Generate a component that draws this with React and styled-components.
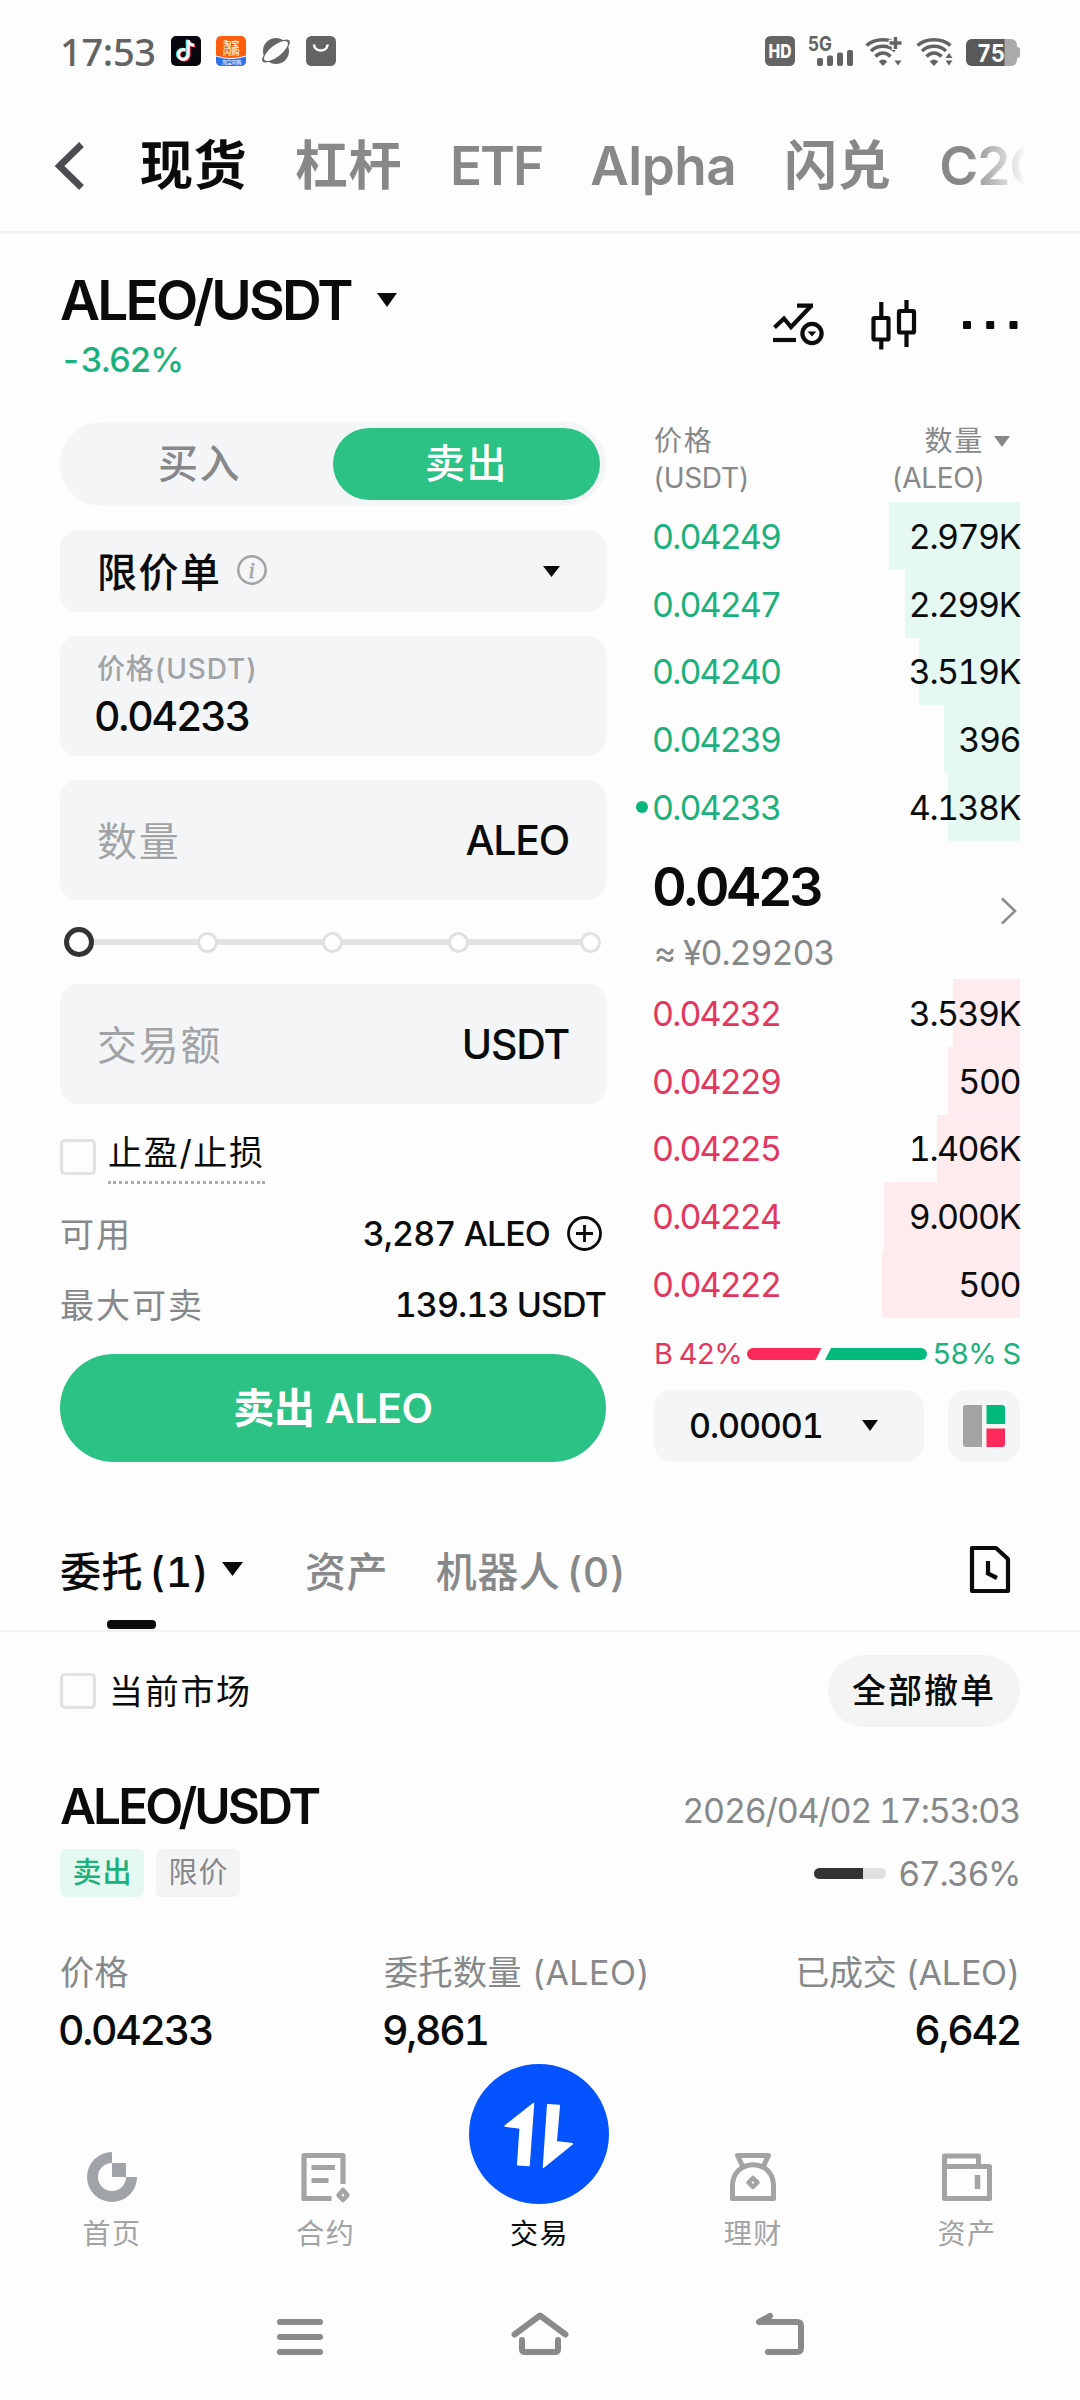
import React from "react";
import styled, { createGlobalStyle, css } from "styled-components";

const colors = {
  ink: "#0a0b0b",
  grey: "#86888a",
  light: "#a1a3a5",
  line: "#f2f2f2",
  field: "#f4f5f7",
  green: "#2cc286",
  up: "#1cb17c",
  down: "#e2375f",
};

const buys = [
  { price: "0.04249", amount: "2.979K", depth: 131 },
  { price: "0.04247", amount: "2.299K", depth: 115 },
  { price: "0.04240", amount: "3.519K", depth: 101 },
  { price: "0.04239", amount: "396", depth: 76 },
  { price: "0.04233", amount: "4.138K", depth: 72, mine: true },
];

const sells = [
  { price: "0.04232", amount: "3.539K", depth: 67 },
  { price: "0.04229", amount: "500", depth: 72 },
  { price: "0.04225", amount: "1.406K", depth: 83 },
  { price: "0.04224", amount: "9.000K", depth: 136 },
  { price: "0.04222", amount: "500", depth: 138 },
];

const GlobalStyle = createGlobalStyle`
  * {
    box-sizing: border-box;
  }
  body {
    margin: 0;
    background: #fdfdfd;
    color: ${colors.ink};
    font-family: Inter, "Noto Sans CJK SC", sans-serif;
    font-variant-numeric: tabular-nums;
  }
  svg {
    display: block;
    flex: none;
    overflow: visible;
  }
`;

const Caret = ({ w = 16, h = 11, color = colors.ink }) => (
  <svg width={w} height={h} viewBox="0 0 16 11" preserveAspectRatio="none">
    <path d="M0 0H16L8 11Z" fill={color} />
  </svg>
);

const notePath = "M14.6 14.2a4.9 4.9 0 1 0 2.6 4.5V4.2c.4 2.9 2.6 4.8 6 5";

const DouyinIcon = () => (
  <svg width="30" height="30" viewBox="0 0 30 30">
    <rect width="30" height="30" rx="5" fill="#07070d" />
    <g fill="none" strokeWidth="3">
      <path d={notePath} stroke="#25f4ee" transform="translate(-1 -.4)" />
      <path d={notePath} stroke="#fe2c55" transform="translate(.9 .7)" />
      <path d={notePath} stroke="#fff" />
    </g>
  </svg>
);

const TaobaoIcon = () => (
  <svg width="30" height="30" viewBox="0 0 30 30">
    <clipPath id="tb">
      <rect width="30" height="30" rx="5" />
    </clipPath>
    <g clipPath="url(#tb)">
      <rect width="30" height="30" fill="#fb5f0c" />
      <path d="M0 19.5Q15 24.5 30 19.5V30H0Z" fill="#2b72ea" />
      <path d="M0 20Q15 25 30 20" fill="none" stroke="#fff" strokeWidth="1" />
      <g fill="#fff" fontWeight="500">
        <text x="7" y="10.5" fontSize="8.3">淘宝</text>
        <text x="7" y="19" fontSize="8.3">闪购</text>
        <text x="6" y="28.4" fontSize="4.8">淘宝闪购</text>
      </g>
    </g>
  </svg>
);

const PlanetIcon = () => (
  <svg width="30" height="30" viewBox="0 0 30 30">
    <circle cx="15" cy="15" r="13" fill="#666" />
    <ellipse cx="15" cy="15" rx="17" ry="6" fill="#666" transform="rotate(-38 15 15)" />
    <ellipse cx="15" cy="15" rx="14.5" ry="5.6" fill="#fdfdfd" transform="rotate(-38 15 15)" />
  </svg>
);

const BagIcon = () => (
  <svg width="30" height="30" viewBox="0 0 30 30">
    <rect width="30" height="30" rx="5.5" fill="#636363" />
    <path d="M8 8.5c.6 8 13 8 13.600 0" fill="none" stroke="#fff" strokeWidth="2.6" />
  </svg>
);

const HdIcon = () => (
  <svg width="30" height="30" viewBox="0 0 30 30">
    <rect width="30" height="30" rx="5.5" fill="#646464" />
    <text x="3.5" y="21.8" fontSize="18.5" fontWeight="800" fill="#fff" textLength="23" lengthAdjust="spacingAndGlyphs">
      HD
    </text>
  </svg>
);

const SignalIcon = () => (
  <svg width="45" height="30" viewBox="0 0 45 30" fill="#636363">
    <text x="0" y="14.5" fontSize="20" fontWeight="700" textLength="24" lengthAdjust="spacingAndGlyphs">
      5G
    </text>
    <rect x="9" y="22" width="6" height="8" rx="2" />
    <rect x="19" y="19.5" width="6" height="10.5" rx="2" />
    <rect x="29" y="16.5" width="6" height="13.5" rx="2" />
    <rect x="39" y="14" width="6" height="16" rx="2" />
  </svg>
);

const WifiIcon = ({ plus }) => (
  <svg width="38" height="30" viewBox="0 0 38 30">
    <g fill="none" stroke="#636363" strokeWidth="3.6">
      <path d="M1.5 9.5Q8 3.7 18 3.7T34.5 9.5" />
      <path d="M6 15Q11 10.3 18 10.3T30 15" />
      <path d="M10.5 20.5Q14 17 18 17T25.5 20.5" />
    </g>
    <path d="M13.8 25.5Q18 21.5 22.2 25.5L18 30Z" fill="#636363" />
    {plus && <path d="M30 0V14M23.5 7H37" stroke="#fdfdfd" strokeWidth="6.5" />}
    {plus && <path d="M30.5 1V13M24.5 7H36.5" stroke="#636363" strokeWidth="3.4" />}
    <path d="M28 16h9v14h-9Z" fill="#fdfdfd" />
    <path d="M29.5 24.5h7l-3.5 5Z" fill="#636363" />
    {!plus && <path d="M29.5 22h7l-3.5-5Z" fill="#636363" />}
  </svg>
);

const BatteryIcon = () => (
  <svg width="54" height="27" viewBox="0 0 54 27">
    <path d="M50 8h1.5a2.5 2.5 0 0 1 2.5 2.5v6a2.5 2.5 0 0 1-2.5 2.5H50Z" fill="#aaa" />
    <rect width="51" height="27" rx="6" fill="#aaa" />
    <path d="M6 0H38.5V27H6a6 6 0 0 1-6-6V6a6 6 0 0 1 6-6Z" fill="#595959" />
    <text x="11" y="22.5" fontSize="24" fontWeight="700" fill="#fff" textLength="28" lengthAdjust="spacingAndGlyphs">
      75
    </text>
  </svg>
);

const BackChevron = () => (
  <svg width="30" height="50" viewBox="0 0 30 50">
    <path d="M26.5 3.5L4.5 25L26.5 46.5" fill="none" stroke="#4b4d51" strokeWidth="6.8" />
  </svg>
);

const ChartAlertIcon = () => (
  <svg width="52" height="44" viewBox="0 0 52 44" fill="none" stroke={colors.ink} strokeWidth="4.2">
    <path d="M1.5 24.5L11 15.5L18 24L38 3M24 2.6H40" />
    <path d="M0 37H23" />
    <circle cx="39" cy="30.5" r="9.6" />
    <path d="M34.5 28.5h8.8L39 33.5Z" fill={colors.ink} stroke="none" />
  </svg>
);

const CandleIcon = () => (
  <svg width="46" height="50" viewBox="0 0 46 50" fill="none" stroke={colors.ink} strokeWidth="4.2">
    <rect x="2.5" y="18" width="15" height="21.5" rx="1" />
    <path d="M10.3 2V17M10.3 40V49.5" />
    <rect x="28" y="11" width="15" height="21.5" rx="1" />
    <path d="M35.5 0V10M35.5 33V47" />
  </svg>
);

const MoreIcon = () => (
  <svg width="55" height="8" viewBox="0 0 55 8" fill={colors.ink}>
    <rect width="8" height="8" rx="1" />
    <rect x="23.2" width="8" height="8" rx="1" />
    <rect x="46.5" width="8" height="8" rx="1" />
  </svg>
);

const InfoIcon = () => (
  <svg width="30" height="30" viewBox="0 0 30 30">
    <circle cx="15" cy="15" r="13.7" fill="none" stroke={colors.light} strokeWidth="2.5" />
    <text x="11.5" y="22.5" fontSize="23" fontStyle="italic" fontFamily="Liberation Serif, serif" letterSpacing="0" fill={colors.light} stroke={colors.light} strokeWidth=".5">
      i
    </text>
  </svg>
);

const PlusCircle = () => (
  <svg width="35" height="35" viewBox="0 0 35 35" fill="none" stroke={colors.ink} strokeWidth="2.8">
    <circle cx="17.5" cy="17.5" r="16" />
    <path d="M17.5 9V26M9 17.5H26" />
  </svg>
);

const ChevronRight = () => (
  <svg width="17" height="28" viewBox="0 0 17 28">
    <path d="M2 1.5L15 14L2 26.5" fill="none" stroke="#8a8c8e" strokeWidth="2.5" />
  </svg>
);

const RatioBar = () => (
  <svg width="180" height="12" viewBox="0 0 180 12">
    <path d="M6 0H74.5L68.5 12H6A6 6 0 0 1 6 0Z" fill="#ff2a5b" />
    <path d="M84 0H174A6 6 0 0 1 174 12H78Z" fill="#00b97c" />
  </svg>
);

const BookLayoutIcon = () => (
  <svg width="42" height="42" viewBox="0 0 42 42">
    <path d="M3 0H19V42H3A3 3 0 0 1 0 39V3A3 3 0 0 1 3 0Z" fill={colors.light} />
    <path d="M23.5 0H39A3 3 0 0 1 42 3V19H23.5Z" fill="#00b97c" />
    <path d="M23.5 23.5H42V39A3 3 0 0 1 39 42H23.5Z" fill="#ff2a5b" />
  </svg>
);

const HistoryIcon = () => (
  <svg width="40" height="47" viewBox="0 0 40 47" fill="none" stroke={colors.ink} strokeWidth="4.2" strokeLinejoin="round">
    <path d="M2 2H26L38 13V45H2Z" />
    <path d="M18 15V27.5L27 32" strokeLinejoin="miter" />
  </svg>
);

const HomeLogo = () => (
  <svg width="50" height="50" viewBox="0 0 50 50" fill="#a0a3a7">
    <path d="M25 0A25 25 0 1 0 50 25H39A14 14 0 1 1 25 11Z" />
    <rect x="25" y="11" width="14" height="14" />
  </svg>
);

const ContractIcon = () => (
  <svg width="50" height="50" viewBox="0 0 50 50" fill="none" stroke={colors.light} strokeWidth="5.2" strokeLinejoin="round">
    <path d="M42 32V3.5H3V46.5H30.5" />
    <path d="M10.5 15.5H34M10.5 28.5H27.5" strokeWidth="5" />
    <path d="M42 38L46.5 43.2L42 48L37.5 43.2Z" strokeWidth="4.5" />
  </svg>
);

const MoneyBagIcon = () => (
  <svg width="50" height="50" viewBox="0 0 50 50" fill="none" stroke={colors.light} strokeWidth="5" strokeLinejoin="round">
    <path d="M4.5 46.5V34C4.5 5.5 45.5 5.5 45.5 34V46.5Z" />
    <path d="M14.5 14L9.5 3.5H40.5L35.5 14" />
    <path d="M25 26L29.5 30.5L25 35L20.5 30.5Z" strokeWidth="4.5" />
  </svg>
);

const WalletIcon = () => (
  <svg width="52" height="50" viewBox="0 0 52 50" fill="none" stroke={colors.light} strokeWidth="5" strokeLinejoin="round">
    <path d="M3.5 14.5H48.5V46.5H3.5V4H37.5V14.5" />
    <path d="M36.5 23V37" strokeWidth="5.5" />
  </svg>
);

const TradeIcon = () => (
  <svg width="140" height="140" viewBox="0 0 140 140" fill="#fff" stroke="#fff" strokeWidth="1.5" strokeLinejoin="round">
    <path d="M64.5 39.5L60 101.600L48.7 100.8L51.2 64L36 62Z" />
    <path d="M78.7 40.7L90.3 41.6L87.2 77.7L103.3 79.8L74.5 103.2Z" />
  </svg>
);

const MenuKey = () => (
  <svg width="46" height="44" viewBox="0 0 46 44" stroke="#8a8a8a" strokeWidth="6" strokeLinecap="round">
    <path d="M3 10H43M3 25H43M3 40H43" />
  </svg>
);

const HomeKey = () => (
  <svg width="58" height="44" viewBox="0 0 58 44" fill="none" stroke="#8a8a8a" strokeWidth="6" strokeLinecap="round" strokeLinejoin="round">
    <path d="M3.5 22.5L29 3.5L54.5 22.5" />
    <path d="M11 28V37Q11 40 14 40H44Q47 40 47 37V28" />
  </svg>
);

const BackKey = () => (
  <svg width="48" height="44" viewBox="0 0 48 44" fill="none" stroke="#8a8a8a" strokeWidth="6" strokeLinecap="round" strokeLinejoin="round">
    <path d="M14 4L3 10H41Q45 10 45 14V36Q45 40 41 40H12" />
  </svg>
);

const Page = styled.div`
  width: 1080px;
  height: 2400px;
  overflow: hidden;
`;

const Row = styled.div`
  display: flex;
  align-items: center;
`;

const StatusBar = styled(Row)`
  height: 100px;
  padding: 2px 60px 0;
  justify-content: space-between;
`;

const Clock = styled.span`
  width: 111px;
  font-size: 38px;
  line-height: 40px;
  font-weight: 500;
  font-family: "Noto Sans", sans-serif;
  letter-spacing: -0.3px;
  color: #636363;
`;

const StatusLeft = styled(Row)`
  gap: 15px;

  ${Clock} {
    margin-right: -15px;
  }
`;

const StatusRight = styled(Row)`
  gap: 12.5px;

  svg:last-child {
    margin-top: 3px;
  }
`;

const TopTabs = styled(Row)`
  height: 134px;
  padding: 0 50px 0 55px;
  border-bottom: 3px solid ${colors.line};
`;

const TabScroller = styled(Row)`
  flex: 1;
  margin-left: 55px;
  gap: 48px;
  overflow: hidden;
  mask-image: linear-gradient(to right, #000 calc(100% - 62px), transparent calc(100% - 4px));
`;

const TopTab = styled.span`
  flex: none;
  font-size: 53px;
  line-height: 70px;
  font-weight: ${(p) => (p.$active ? 700 : 600)};
  color: ${(p) => (p.$active ? colors.ink : colors.grey)};
  letter-spacing: ${(p) => p.$track ?? 0.5}px;
`;

const PairHeader = styled.header`
  display: flex;
  justify-content: space-between;
  height: 188px;
  padding: 34px 62px 0 60px;
`;

const PairName = styled(Row)`
  gap: 26px;
  font-size: 55px;
  line-height: 64px;
  font-weight: 600;
  letter-spacing: -2.8px;
`;

const PairChange = styled.div`
  margin-top: 8px;
  font-size: 34px;
  line-height: 40px;
  font-weight: 500;
  letter-spacing: -1.4px;
  color: ${colors.up};
`;

const PairTools = styled(Row)`
  height: 114px;
  gap: 46px;
`;

const Trade = styled.main`
  display: grid;
  grid-template-columns: 546px 366px;
  gap: 48px;
  padding: 0 60px;
  height: 1040px;
`;

const Column = styled.section`
  display: flex;
  flex-direction: column;
`;

const SideSwitch = styled.div`
  display: grid;
  grid-template-columns: 1fr 267px;
  height: 84px;
  padding: 6px;
  border-radius: 42px;
  background: ${colors.field};
`;

const SideOption = styled.button`
  border: 0;
  border-radius: 36px;
  background: ${(p) => (p.$active ? colors.green : "transparent")};
  color: ${(p) => (p.$active ? "#fff" : colors.grey)};
  font: 500 40px/72px Inter, "Noto Sans CJK SC", sans-serif;
  letter-spacing: 1.5px;
  padding: 0;
`;

const Field = styled(Row)`
  justify-content: space-between;
  height: ${(p) => p.$height || 120}px;
  margin-top: ${(p) => p.$top ?? 24}px;
  padding: 0 ${(p) => p.$right || 37}px 0 37px;
  border-radius: 18px;
  background: ${colors.field};
  font-size: 41px;
  font-weight: 500;
  letter-spacing: -1.2px;
`;

const OrderType = styled(Row)`
  gap: 15px;
  margin-top: -2px;
  font-size: 40px;
  letter-spacing: 1.5px;
`;

const Placeholder = styled.span`
  margin-top: -3px;
  color: ${colors.light};
  font-size: 40px;
  font-weight: 400;
  letter-spacing: 1.8px;
`;

const PriceField = styled(Field)`
  flex-direction: column;
  align-items: flex-start;
  justify-content: flex-start;
  padding-top: 13px;
`;

const PriceLabel = styled.span`
  font-size: 28px;
  line-height: 40px;
  color: ${colors.light};
  letter-spacing: 0.8px;
`;

const PriceValue = styled.span`
  margin: 2px 0 0 -3px;
  line-height: 50px;
  letter-spacing: -2.2px;
`;

const SliderStop = styled.i`
  position: relative;
  width: ${(p) => (p.$current ? 30 : 21)}px;
  height: ${(p) => (p.$current ? 30 : 21)}px;
  margin-right: ${(p) => (p.$current ? -2 : 0)}px;
  border: ${(p) => (p.$current ? "5px solid #323335" : "3px solid #dfe1e1")};
  border-radius: 50%;
  background: #fff;
`;

const Slider = styled(Row)`
  position: relative;
  height: 84px;
  padding: 0 5px 0 4px;
  gap: 104.5px;

  &::before {
    content: "";
    position: absolute;
    left: 20px;
    right: 20px;
    top: 39px;
    height: 6px;
    background: #e1e3e3;
  }

  ${SliderStop}:last-child {
    margin-left: auto;
  }
`;

const CheckBox = styled.i`
  width: 36px;
  height: 36px;
  border: 3px solid #e1e2e2;
  border-radius: 5px;
`;

const StopRow = styled.div`
  display: flex;
  align-items: flex-start;
  gap: 12px;
  height: 94px;
  padding-top: 24px;

  ${CheckBox} {
    margin-top: 11px;
  }
`;

const StopLabel = styled.span`
  height: 56px;
  font-size: 34px;
  line-height: 50px;
  letter-spacing: 1.7px;
  border-bottom: 3px dotted #aaacae;
`;

const BalanceRow = styled(Row)`
  height: 71px;
  justify-content: space-between;
  font-size: 34px;
`;

const BalanceLabel = styled.span`
  margin-top: -3px;
  color: ${colors.grey};
  letter-spacing: 2px;
`;

const BalanceValue = styled(Row)`
  gap: 17px;
  padding-right: ${(p) => (p.$icon ? 4 : 0)}px;
  font-weight: 500;
  letter-spacing: -0.9px;
`;

const SellButton = styled.button`
  height: 108px;
  margin-top: 14px;
  border: 0;
  border-radius: 54px;
  background: ${colors.green};
  color: #fff;
  font: 600 41px/50px Inter, "Noto Sans CJK SC", sans-serif;
  letter-spacing: -0.3px;
`;

const BookHead = styled.div`
  display: flex;
  justify-content: space-between;
  height: 80px;
  padding-top: 1px;
  font-size: 28px;
  line-height: 37px;
  color: ${colors.grey};
`;

const HeadName = styled(Row)`
  gap: 10px;
  letter-spacing: 1.8px;
`;

const HeadUnit = styled.div`
  margin-left: -1px;
  letter-spacing: -0.3px;
`;

const BookHeadCell = styled.div`
  ${(p) =>
    p.$right &&
    css`
      padding-right: 35px;

      ${HeadName} {
        justify-content: flex-end;
        margin-right: -25px;
      }
    `}
`;

const Level = styled(Row)`
  position: relative;
  height: 67.8px;
  padding-top: 1px;
  justify-content: space-between;
  font-size: 34px;
  letter-spacing: -1.5px;
  background: linear-gradient(${(p) => (p.$side === "buy" ? "#e5f8f1, #e5f8f1" : "#fdebee, #fdebee")}) right / ${(p) => p.$depth}px 100% no-repeat;
`;

const LevelPrice = styled.span`
  margin-left: -2px;
  letter-spacing: -1.9px;
  color: ${(p) => (p.$side === "buy" ? colors.up : colors.down)};
`;

const MineDot = styled.i`
  position: absolute;
  left: -18px;
  top: 28px;
  width: 12px;
  height: 12px;
  border-radius: 50%;
  background: #06b57a;
`;

const LastPrice = styled(Row)`
  height: 138px;
  justify-content: space-between;
  padding: 12px 3px 0 0;

  svg {
    margin-top: -10px;
  }
`;

const LastValue = styled.div`
  margin-left: -2px;
  font-size: 54px;
  line-height: 66px;
  font-weight: 600;
  letter-spacing: -3.4px;
`;

const FiatValue = styled.div`
  margin-top: 8px;
  font-size: 34px;
  line-height: 50px;
  color: ${colors.grey};
  letter-spacing: -1.1px;
`;

const Ratio = styled(Row)`
  height: 72px;
  justify-content: space-between;
  font-size: 29px;
  letter-spacing: -1px;
`;

const RatioText = styled.span`
  color: ${(p) => (p.$side === "buy" ? colors.up : colors.down)};
`;

const BookControls = styled.div`
  display: grid;
  grid-template-columns: 270px 72px;
  justify-content: space-between;
  height: 72px;
`;

const Precision = styled(Row)`
  justify-content: space-between;
  padding: 0 46px 0 35px;
  border-radius: 18px;
  background: ${colors.field};
  font-size: 34px;
  font-weight: 500;
  letter-spacing: -1.1px;
`;

const LayoutButton = styled(Row)`
  justify-content: center;
  border-radius: 18px;
  background: ${colors.field};
`;

const OrderTabs = styled(Row)`
  height: 120px;
  margin-top: 50px;
  padding: 0 70px 0 60px;
  border-bottom: 2px solid ${colors.line};
`;

const OrderTab = styled(Row)`
  position: relative;
  height: 118px;
  margin-right: ${(p) => p.$gap || 0}px;
  padding-bottom: 5px;
  gap: 13px;
  font-size: 41px;
  font-weight: 500;
  letter-spacing: 0.4px;
  word-spacing: -5px;
  color: ${(p) => (p.$active ? colors.ink : colors.grey)};

  ${(p) =>
    p.$active &&
    css`
      &::after {
        content: "";
        position: absolute;
        left: 47px;
        bottom: 1px;
        width: 49px;
        height: 9px;
        border-radius: 4px;
        background: ${colors.ink};
      }
    `}
`;

const HistorySlot = styled.div`
  margin: -3px 0 0 auto;
`;

const FilterRow = styled(Row)`
  height: 118px;
  padding: 0 60px;
  gap: 13px;
  font-size: 34px;
  letter-spacing: 1.7px;
`;

const FilterLabel = styled.span`
  margin-top: -3px;
`;

const CancelAll = styled.button`
  margin-left: auto;
  width: 192px;
  height: 72px;
  padding: 0;
  border: 0;
  border-radius: 36px;
  background: #f4f4f5;
  color: ${colors.ink};
  font: 500 34px/50px Inter, "Noto Sans CJK SC", sans-serif;
  letter-spacing: 2px;
`;

const OrderCard = styled.article`
  height: 305px;
  padding: 26px 60px 0;
`;

const OrderLine = styled(Row)`
  height: ${(p) => p.$height}px;
  margin-top: ${(p) => p.$top || 0}px;
  justify-content: space-between;
`;

const OrderPair = styled.h2`
  margin: 0;
  font-size: 49.5px;
  line-height: 60px;
  font-weight: 600;
  letter-spacing: -2.9px;
`;

const OrderTime = styled.time`
  padding-top: 8px;
  font-size: 34px;
  color: ${colors.grey};
  letter-spacing: -1.2px;
`;

const Tags = styled(Row)`
  gap: 12px;
`;

const Tag = styled.span`
  width: 84px;
  height: 48px;
  padding-left: 1px;
  border-radius: 6px;
  font-size: 29px;
  line-height: 48px;
  letter-spacing: 1px;
  text-align: center;
  background: ${(p) => (p.$sell ? "#e5f8f1" : "#f4f4f5")};
  color: ${(p) => (p.$sell ? colors.up : colors.grey)};
  font-weight: ${(p) => (p.$sell ? 500 : 400)};
`;

const Progress = styled(Row)`
  gap: 12px;
  font-size: 34px;
  color: ${colors.grey};
  letter-spacing: -1.5px;
`;

const ProgressTrack = styled.div`
  width: 72px;
  height: 11px;
  border-radius: 6px;
  overflow: hidden;
  background: #dfe1e1;
`;

const ProgressFill = styled.div`
  width: ${(p) => p.$value}%;
  height: 100%;
  background: #323335;
`;

const Stats = styled.dl`
  display: grid;
  grid-template-columns: 324px auto 1fr;
  margin: 56px 0 0;
`;

const Stat = styled.div`
  text-align: ${(p) => (p.$right ? "right" : "left")};

  dt {
    font-size: 34px;
    line-height: 40px;
    color: ${colors.grey};
    letter-spacing: ${(p) => (p.$right ? -0.2 : 0.5)}px;
  }
  dd {
    margin: 12px 0 0 -2px;
    font-size: 41px;
    line-height: 50px;
    font-weight: 500;
    letter-spacing: -2.3px;
  }
`;

const TabBar = styled.nav`
  display: grid;
  grid-template-columns: repeat(5, 213.8px);
  align-items: end;
  height: 209px;
  padding: 0 0 12px 5px;
`;

const TabItem = styled.div`
  display: flex;
  flex-direction: column;
  align-items: center;
  gap: ${(p) => (p.$active ? 12 : 14)}px;
  font-size: 28px;
  line-height: 36px;
  letter-spacing: 1.5px;
  color: ${(p) => (p.$active ? colors.ink : colors.light)};
`;

const TradeBadge = styled.div`
  width: 140px;
  height: 140px;
  border-radius: 50%;
  background: #0552ff;
`;

const SystemKeys = styled.div`
  display: grid;
  grid-template-columns: repeat(3, 240px);
  justify-content: center;
  justify-items: center;
  padding-top: 48px;
`;

const OrderBookSide = ({ side, levels }) =>
  levels.map((level) => (
    <Level key={level.price} $side={side} $depth={level.depth}>
      {level.mine && <MineDot />}
      <LevelPrice $side={side}>{level.price}</LevelPrice>
      <span>{level.amount}</span>
    </Level>
  ));

const OrderForm = () => (
  <Column>
    <SideSwitch>
      <SideOption>买入</SideOption>
      <SideOption $active>卖出</SideOption>
    </SideSwitch>
    <Field $height={82} $right={46}>
      <OrderType>
        限价单 <InfoIcon />
      </OrderType>
      <Caret w={17} />
    </Field>
    <PriceField>
      <PriceLabel>价格(USDT)</PriceLabel>
      <PriceValue>0.04233</PriceValue>
    </PriceField>
    <Field>
      <Placeholder>数量</Placeholder>
      ALEO
    </Field>
    <Slider>
      <SliderStop $current />
      <SliderStop />
      <SliderStop />
      <SliderStop />
      <SliderStop />
    </Slider>
    <Field $top={0}>
      <Placeholder>交易额</Placeholder>
      USDT
    </Field>
    <StopRow>
      <CheckBox />
      <StopLabel>止盈/止损</StopLabel>
    </StopRow>
    <BalanceRow>
      <BalanceLabel>可用</BalanceLabel>
      <BalanceValue $icon>
        3,287 ALEO <PlusCircle />
      </BalanceValue>
    </BalanceRow>
    <BalanceRow>
      <BalanceLabel>最大可卖</BalanceLabel>
      <BalanceValue>139.13 USDT</BalanceValue>
    </BalanceRow>
    <SellButton>卖出 ALEO</SellButton>
  </Column>
);

const OrderBook = () => (
  <Column>
    <BookHead>
      <BookHeadCell>
        <HeadName>价格</HeadName>
        <HeadUnit>(USDT)</HeadUnit>
      </BookHeadCell>
      <BookHeadCell $right>
        <HeadName>
          数量 <Caret color={colors.grey} />
        </HeadName>
        <HeadUnit>(ALEO)</HeadUnit>
      </BookHeadCell>
    </BookHead>
    <OrderBookSide side="buy" levels={buys} />
    <LastPrice>
      <div>
        <LastValue>0.0423</LastValue>
        <FiatValue>≈ ¥0.29203</FiatValue>
      </div>
      <ChevronRight />
    </LastPrice>
    <OrderBookSide side="sell" levels={sells} />
    <Ratio>
      <RatioText>B 42%</RatioText>
      <RatioBar />
      <RatioText $side="buy">58% S</RatioText>
    </Ratio>
    <BookControls>
      <Precision>
        0.00001 <Caret />
      </Precision>
      <LayoutButton>
        <BookLayoutIcon />
      </LayoutButton>
    </BookControls>
  </Column>
);

const App = () => (
  <Page>
    <GlobalStyle />
    <StatusBar>
      <StatusLeft>
        <Clock>17:53</Clock>
        <DouyinIcon />
        <TaobaoIcon />
        <PlanetIcon />
        <BagIcon />
      </StatusLeft>
      <StatusRight>
        <HdIcon />
        <SignalIcon />
        <WifiIcon plus />
        <WifiIcon />
        <BatteryIcon />
      </StatusRight>
    </StatusBar>
    <TopTabs>
      <BackChevron />
      <TabScroller>
        <TopTab $active>现货</TopTab>
        <TopTab>杠杆</TopTab>
        <TopTab $track={-2}>ETF</TopTab>
        <TopTab $track={-0.5}>Alpha</TopTab>
        <TopTab>闪兑</TopTab>
        <TopTab $track={-1.5}>C2C</TopTab>
      </TabScroller>
    </TopTabs>
    <PairHeader>
      <div>
        <PairName>
          ALEO/USDT <Caret w={20} h={14} />
        </PairName>
        <PairChange>-3.62%</PairChange>
      </div>
      <PairTools>
        <ChartAlertIcon />
        <CandleIcon />
        <MoreIcon />
      </PairTools>
    </PairHeader>
    <Trade>
      <OrderForm />
      <OrderBook />
    </Trade>
    <OrderTabs>
      <OrderTab $active $gap={62}>
        委托 (1) <Caret w={21} h={14} />
      </OrderTab>
      <OrderTab $gap={48}>资产</OrderTab>
      <OrderTab>机器人 (0)</OrderTab>
      <HistorySlot>
        <HistoryIcon />
      </HistorySlot>
    </OrderTabs>
    <FilterRow>
      <CheckBox />
      <FilterLabel>当前市场</FilterLabel>
      <CancelAll>全部撤单</CancelAll>
    </FilterRow>
    <OrderCard>
      <OrderLine $height={60}>
        <OrderPair>ALEO/USDT</OrderPair>
        <OrderTime>2026/04/02 17:53:03</OrderTime>
      </OrderLine>
      <OrderLine $height={48} $top={13}>
        <Tags>
          <Tag $sell>卖出</Tag>
          <Tag>限价</Tag>
        </Tags>
        <Progress>
          <ProgressTrack>
            <ProgressFill $value={67.36} />
          </ProgressTrack>
          67.36%
        </Progress>
      </OrderLine>
      <Stats>
        <Stat>
          <dt>价格</dt>
          <dd>0.04233</dd>
        </Stat>
        <Stat>
          <dt>委托数量 (ALEO)</dt>
          <dd>9,861</dd>
        </Stat>
        <Stat $right>
          <dt>已成交 (ALEO)</dt>
          <dd>6,642</dd>
        </Stat>
      </Stats>
    </OrderCard>
    <TabBar>
      <TabItem>
        <HomeLogo />
        首页
      </TabItem>
      <TabItem>
        <ContractIcon />
        合约
      </TabItem>
      <TabItem $active>
        <TradeBadge>
          <TradeIcon />
        </TradeBadge>
        交易
      </TabItem>
      <TabItem>
        <MoneyBagIcon />
        理财
      </TabItem>
      <TabItem>
        <WalletIcon />
        资产
      </TabItem>
    </TabBar>
    <SystemKeys>
      <MenuKey />
      <HomeKey />
      <BackKey />
    </SystemKeys>
  </Page>
);

export default App;
